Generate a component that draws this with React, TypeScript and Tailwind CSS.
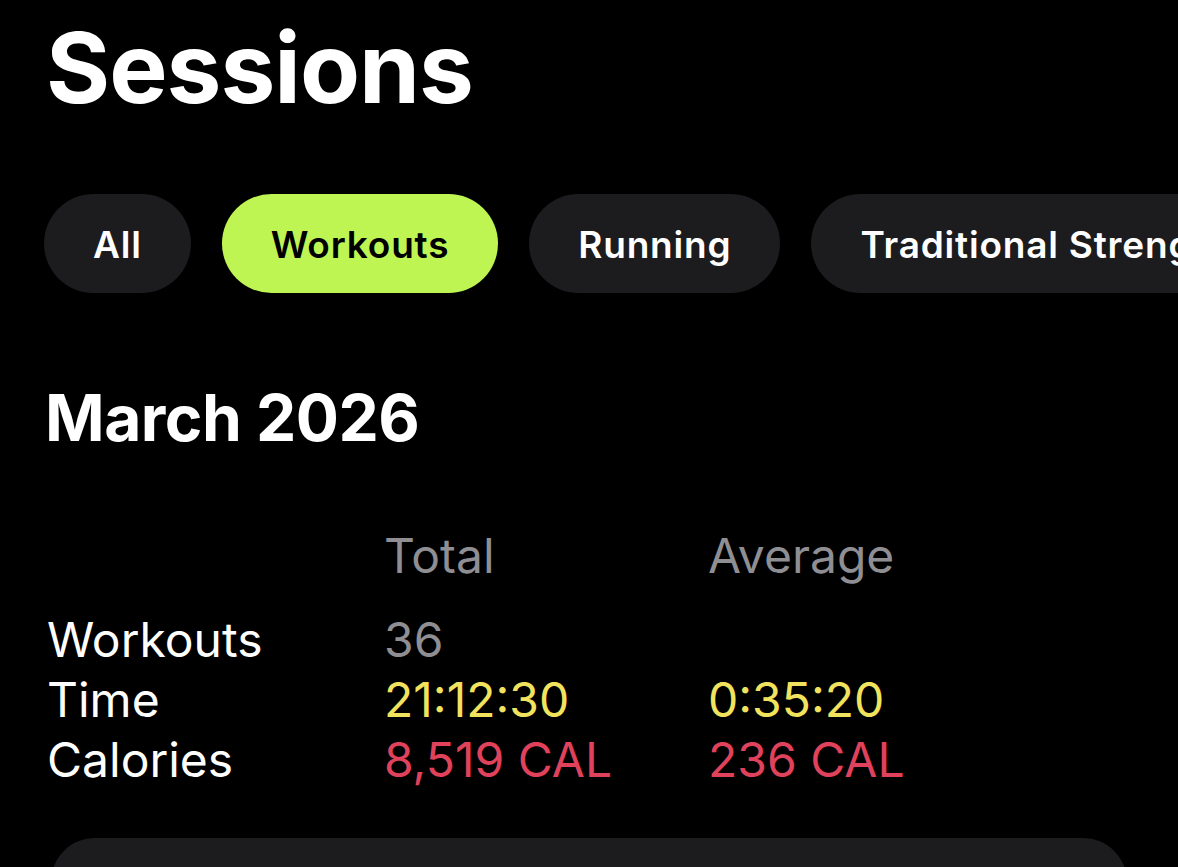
import React from "react";

const chips = ["All", "Workouts", "Running", "Traditional Strength Training"];

export default function App() {
  return (
    <div
      className="w-[1178px] h-[867px] overflow-hidden bg-black text-white"
      style={{ fontFamily: "Inter, 'Noto Sans', sans-serif" }}
    >
      {/* Title */}
      <h1 className="pl-[46px] pt-[19px] text-[98px] font-bold leading-none tracking-[-1px]">
        Sessions
      </h1>

      {/* Filter chips */}
      <div className="mt-[77px] flex gap-[31px] pl-[44px] whitespace-nowrap">
        {chips.map((c) => (
          <div
            key={c}
            className={
              c === "Workouts"
                ? "flex h-[99px] shrink-0 items-center rounded-full bg-[#bef552] px-[49px] pt-[2px] text-[37px] font-semibold tracking-[0.8px] text-black"
                : "flex h-[99px] shrink-0 items-center rounded-full bg-[#1c1c1e] px-[49px] pt-[2px] text-[37px] font-semibold tracking-[0.8px] text-white"
            }
          >
            {c}
          </div>
        ))}
      </div>

      {/* Month */}
      <h2 className="mt-[93px] pl-[45px] text-[64px] font-bold leading-none tracking-[-0.5px]">
        March 2026
      </h2>

      {/* Stats table */}
      <div className="mt-[76px] grid grid-cols-[337px_324px_1fr] pl-[47px] text-[48px] leading-[60px]">
        <div />
        <div className="text-[#8e8e93]">Total</div>
        <div className="text-[#8e8e93]">Average</div>

        <div className="mt-[24px]">Workouts</div>
        <div className="mt-[24px] text-[#8e8e93]">36</div>
        <div className="mt-[24px]" />

        <div>Time</div>
        <div className="text-[#f2e35e]">21:12:30</div>
        <div className="text-[#f2e35e]">0:35:20</div>

        <div>Calories</div>
        <div className="text-[#e0425c]">8,519 CAL</div>
        <div className="text-[#e0425c]">236 CAL</div>
      </div>

      {/* Next card */}
      <div className="mx-[51px] mt-[48px] h-[200px] rounded-[44px] bg-[#1c1c1e]" />
    </div>
  );
}
